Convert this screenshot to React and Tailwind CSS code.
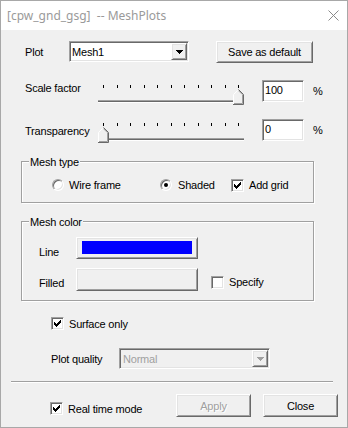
import React from "react";

const raised =
  "border border-t-white border-l-white border-r-[#696969] border-b-[#696969] shadow-[inset_1px_1px_0_#e3e3e3,inset_-1px_-1px_0_#a0a0a0] bg-[#f0f0f0]";
const sunken =
  "border border-t-[#a0a0a0] border-l-[#a0a0a0] border-r-white border-b-white shadow-[inset_1px_1px_0_#696969,inset_-1px_-1px_0_#e3e3e3]";

function CheckMark() {
  const rows = [
    [6],
    [5, 6],
    [0, 4, 5, 6],
    [0, 1, 3, 4, 5],
    [0, 1, 2, 3, 4],
    [1, 2, 3],
    [2],
  ];
  return (
    <svg width="7" height="7" shapeRendering="crispEdges" className="block">
      {rows.map((r, y) =>
        r.map((x) => <rect key={`${x}-${y}`} x={x} y={y} width="1" height="1" fill="#000" />)
      )}
    </svg>
  );
}

function Check({ checked, className = "" }) {
  return (
    <div
      className={`w-[13px] h-[13px] bg-white ${sunken} flex items-center justify-center shrink-0 ${className}`}
    >
      {checked && <CheckMark />}
    </div>
  );
}

function Radio({ checked }) {
  return (
    <div className="w-[12px] h-[12px] rounded-full bg-white border border-t-[#a0a0a0] border-l-[#a0a0a0] border-r-white border-b-white shadow-[inset_1px_1px_0_#696969,inset_-1px_-1px_0_#e3e3e3] flex items-center justify-center shrink-0">
      {checked && <div className="w-[4px] h-[4px] rounded-full bg-black" />}
    </div>
  );
}

function Arrow({ color }) {
  return (
    <svg width="7" height="4" shapeRendering="crispEdges" className="block">
      <rect x="0" y="0" width="7" height="1" fill={color} />
      <rect x="1" y="1" width="5" height="1" fill={color} />
      <rect x="2" y="2" width="3" height="1" fill={color} />
      <rect x="3" y="3" width="1" height="1" fill={color} />
    </svg>
  );
}

function Combo({ className = "", text, disabled, textPad = "pl-[2px]" }) {
  return (
    <div
      className={`${sunken} h-[21px] flex items-center ${
        disabled ? "bg-[#f0f0f0] text-[#a0a0a0]" : "bg-white text-black"
      } ${className}`}
    >
      <div className={`flex-1 ${textPad} leading-[14px]`}>{text}</div>
      <div className={`${raised} w-[16px] h-[17px] mr-[1px] flex items-center justify-center`}>
        <Arrow color={disabled ? "#a0a0a0" : "#000"} />
      </div>
    </div>
  );
}

function Button({ className = "", children, disabled }) {
  return (
    <div
      className={`${raised} flex items-center justify-center ${
        disabled ? "text-[#a0a0a0] [text-shadow:1px_1px_0_#fff]" : "text-black"
      } ${className}`}
    >
      {children}
    </div>
  );
}

function Track({ right }) {
  const ticks = Array.from({ length: 11 }, (_, i) => Math.round(5 + 13.5 * i));
  const tx = right ? 135 : 0;
  return (
    <svg width="146" height="20" className="block shrink-0">
      <g shapeRendering="crispEdges">
        {ticks.map((x) => (
          <rect key={x} x={x} y={0} width={1} height={3} fill="#000" />
        ))}
        <rect x="0" y="15" width="146" height="1" fill="#a0a0a0" />
        <rect x="0" y="16" width="146" height="1" fill="#696969" />
        <rect x="0" y="17" width="146" height="1" fill="#ffffff" />
      </g>
      <polygon
        points={`${tx},19.5 ${tx},9.5 ${tx + 5.5},4 ${tx + 11},9.5 ${tx + 11},19.5`}
        fill="#f0f0f0"
      />
      <polyline
        points={`${tx + 0.5},19 ${tx + 0.5},9.5 ${tx + 5.5},4.5`}
        fill="none"
        stroke="#ffffff"
        strokeWidth="1"
      />
      <polyline
        points={`${tx + 5.5},4.5 ${tx + 10.5},9.5 ${tx + 10.5},19.5 ${tx},19.5`}
        fill="none"
        stroke="#696969"
        strokeWidth="1"
      />
      <polyline
        points={`${tx + 5.5},5.7 ${tx + 9.5},9.7 ${tx + 9.5},18.5 ${tx + 1},18.5`}
        fill="none"
        stroke="#a0a0a0"
        strokeWidth="1"
      />
    </svg>
  );
}

function Edit({ value }) {
  return (
    <div className={`${sunken} bg-white w-[42px] h-[22px] pl-[2px] pt-[2px] leading-[14px] shrink-0`}>
      {value}
    </div>
  );
}

const groupBox =
  "relative ml-[20px] w-[293px] border border-[#a0a0a0] shadow-[inset_1px_1px_0_#fff,1px_1px_0_#fff]";

export default function App() {
  return (
    <div className="w-[348px] h-[428px] border border-[#a8a8a8] bg-[#f0f0f0] flex flex-col font-['Liberation_Sans',Arial,sans-serif] text-[11px] leading-[14px] tracking-[-0.2px] text-black overflow-hidden">
      {/* Title bar */}
      <div className="h-[29px] bg-white flex items-center shrink-0 pl-[6px] pr-[8px]">
        <span className="flex-1 whitespace-pre font-['Noto_Sans',sans-serif] text-[12px] leading-[16px] tracking-normal text-[#9a9a9a]">
          [cpw_gnd_gsg]  -- MeshPlots
        </span>
        <svg width="11" height="11" className="block">
          <path d="M0.5 0.5 L10.5 10.5 M10.5 0.5 L0.5 10.5" stroke="#8a8a8a" strokeWidth="1" />
        </svg>
      </div>

      {/* Body */}
      <div className="flex flex-col">
        {/* Plot row */}
        <div className="flex items-start mt-[11px] h-[22px]">
          <div className="ml-[24px] w-[44px] h-[22px] flex items-center">Plot</div>
          <Combo className="w-[120px]" text="Mesh1" />
          <Button className="ml-[27px] w-[97px] h-[22px]">Save as default</Button>
        </div>

        {/* Scale factor */}
        <div className="flex items-start mt-[17px] h-[24px]">
          <div className="ml-[24px] w-[73px] h-[16px] leading-[16px]">Scale factor</div>
          <div className="mt-[5px]">
            <Track right />
          </div>
          <div className="ml-[18px]">
            <Edit value="100" />
          </div>
          <div className="ml-[9px] h-[22px] flex items-center">%</div>
        </div>

        {/* Transparency */}
        <div className="flex items-start mt-[15px] h-[22px]">
          <div className="ml-[24px] w-[73px] mt-[4px] h-[16px] leading-[16px]">Transparency</div>
          <div className="mt-[4px]">
            <Track />
          </div>
          <div className="ml-[18px]">
            <Edit value="0" />
          </div>
          <div className="ml-[9px] h-[22px] flex items-center">%</div>
        </div>

        {/* Mesh type */}
        <div className={`${groupBox} mt-[20px] h-[42px]`}>
          <div className="absolute left-[7px] top-[-7px] px-[1px] bg-[#f0f0f0] leading-[14px]">Mesh type</div>
          <div className="flex items-center mt-[15px] h-[16px] pl-[30px]">
            <div className="w-[108px] flex items-center gap-[5px]">
              <Radio />
              <span>Wire frame</span>
            </div>
            <div className="w-[71px] flex items-center gap-[6px]">
              <Radio checked />
              <span>Shaded</span>
            </div>
            <div className="flex items-center gap-[5px]">
              <Check checked />
              <span>Add grid</span>
            </div>
          </div>
        </div>

        {/* Mesh color */}
        <div className={`${groupBox} mt-[18px] h-[80px]`}>
          <div className="absolute left-[7px] top-[-7px] px-[1px] bg-[#f0f0f0] leading-[14px]">Mesh color</div>
          <div className="flex items-start mt-[15px] h-[22px]">
            <div className="ml-[17px] w-[37px] pt-[8px] leading-[14px]">Line</div>
            <div className={`${raised} w-[122px] h-[22px] pt-[3px] pl-[5px]`}>
              <div className="w-[110px] h-[13px] bg-[#0000ff]" />
            </div>
          </div>
          <div className="flex items-start mt-[9px] h-[22px]">
            <div className="ml-[17px] w-[37px] pt-[8px] leading-[14px]">Filled</div>
            <div className={`${raised} w-[122px] h-[23px]`} />
            <Check className="ml-[13px] mt-[8px]" />
            <div className="ml-[5px] mt-[7px] leading-[14px]">Specify</div>
          </div>
        </div>

        {/* Surface only */}
        <div className="flex items-center mt-[16px] h-[13px] ml-[50px]">
          <Check checked />
          <span className="ml-[5px]">Surface only</span>
        </div>

        {/* Plot quality */}
        <div className="flex items-start mt-[18px] h-[21px]">
          <div className="ml-[50px] w-[68px] h-[21px] flex items-center">Plot quality</div>
          <Combo className="w-[151px]" text="Normal" disabled textPad="pl-[3px]" />
        </div>

        {/* Separator */}
        <div className="mt-[12px] ml-[10px] w-[322px] h-[2px] border-t border-t-[#a0a0a0] border-b border-b-white" />

        {/* Bottom row */}
        <div className="flex items-start mt-[11px] h-[23px]">
          <div className="ml-[49px] w-[126px] flex items-start">
            <Check checked className="mt-[8px]" />
            <span className="ml-[5px] mt-[8px] leading-[14px]">Real time mode</span>
          </div>
          <Button disabled className="w-[75px] h-[23px]">
            Apply
          </Button>
          <Button className="ml-[12px] w-[75px] h-[23px]">Close</Button>
        </div>
      </div>
    </div>
  );
}
